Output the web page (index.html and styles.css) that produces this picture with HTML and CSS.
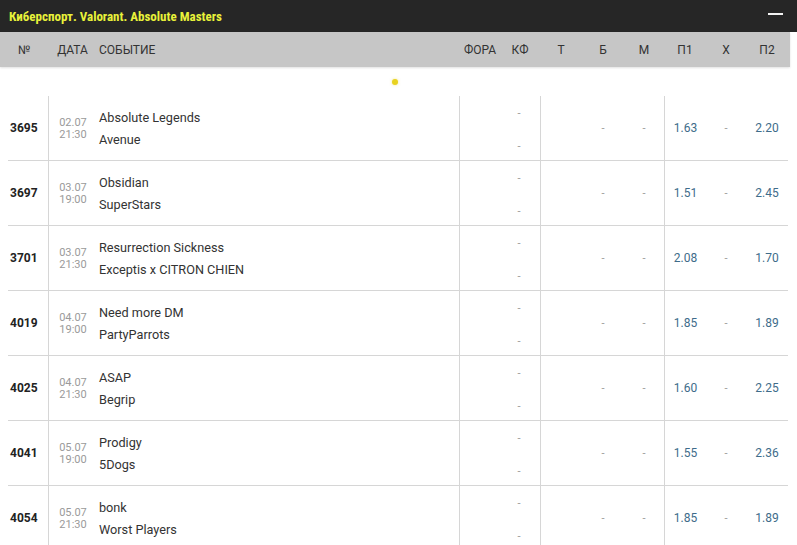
FILE: index.html
```html
<!DOCTYPE html>
<html lang="ru">
<head>
<meta charset="utf-8">
<title>Киберспорт. Valorant. Absolute Masters</title>
<link rel="stylesheet" href="styles.css">
</head>
<body>
<div class="topbar">
  <span class="title">Киберспорт. Valorant. Absolute Masters</span>
  <span class="collapse"></span>
</div>
<div class="head">
  <div class="hc c-num">№</div>
  <div class="hc c-date">ДАТА</div>
  <div class="hc c-event">СОБЫТИЕ</div>
  <div class="hc c-fora">ФОРА</div>
  <div class="hc">КФ</div>
  <div class="hc">Т</div>
  <div class="hc">Б</div>
  <div class="hc">М</div>
  <div class="hc">П1</div>
  <div class="hc">Х</div>
  <div class="hc">П2</div>
</div>
<div class="loader"><span class="dot"></span></div>
<div class="rows">
  <div class="row">
    <div class="num">3695</div>
    <div class="date"><span>02.07</span><span>21:30</span></div>
    <div class="event"><span>Absolute Legends</span><span>Avenue</span></div>
    <div class="fora"></div>
    <div class="kf"><span>-</span><span>-</span></div>
    <div class="t sep"></div><div class="dash">-</div><div class="dash">-</div>
    <div class="odd sep">1.63</div><div class="dash">-</div><div class="odd">2.20</div>
  </div>
  <div class="row">
    <div class="num">3697</div>
    <div class="date"><span>03.07</span><span>19:00</span></div>
    <div class="event"><span>Obsidian</span><span>SuperStars</span></div>
    <div class="fora"></div>
    <div class="kf"><span>-</span><span>-</span></div>
    <div class="t sep"></div><div class="dash">-</div><div class="dash">-</div>
    <div class="odd sep">1.51</div><div class="dash">-</div><div class="odd">2.45</div>
  </div>
  <div class="row">
    <div class="num">3701</div>
    <div class="date"><span>03.07</span><span>21:30</span></div>
    <div class="event"><span>Resurrection Sickness</span><span>Exceptis x CITRON CHIEN</span></div>
    <div class="fora"></div>
    <div class="kf"><span>-</span><span>-</span></div>
    <div class="t sep"></div><div class="dash">-</div><div class="dash">-</div>
    <div class="odd sep">2.08</div><div class="dash">-</div><div class="odd">1.70</div>
  </div>
  <div class="row">
    <div class="num">4019</div>
    <div class="date"><span>04.07</span><span>19:00</span></div>
    <div class="event"><span>Need more DM</span><span>PartyParrots</span></div>
    <div class="fora"></div>
    <div class="kf"><span>-</span><span>-</span></div>
    <div class="t sep"></div><div class="dash">-</div><div class="dash">-</div>
    <div class="odd sep">1.85</div><div class="dash">-</div><div class="odd">1.89</div>
  </div>
  <div class="row">
    <div class="num">4025</div>
    <div class="date"><span>04.07</span><span>21:30</span></div>
    <div class="event"><span>ASAP</span><span>Begrip</span></div>
    <div class="fora"></div>
    <div class="kf"><span>-</span><span>-</span></div>
    <div class="t sep"></div><div class="dash">-</div><div class="dash">-</div>
    <div class="odd sep">1.60</div><div class="dash">-</div><div class="odd">2.25</div>
  </div>
  <div class="row">
    <div class="num">4041</div>
    <div class="date"><span>05.07</span><span>19:00</span></div>
    <div class="event"><span>Prodigy</span><span>5Dogs</span></div>
    <div class="fora"></div>
    <div class="kf"><span>-</span><span>-</span></div>
    <div class="t sep"></div><div class="dash">-</div><div class="dash">-</div>
    <div class="odd sep">1.55</div><div class="dash">-</div><div class="odd">2.36</div>
  </div>
  <div class="row">
    <div class="num">4054</div>
    <div class="date"><span>05.07</span><span>21:30</span></div>
    <div class="event"><span>bonk</span><span>Worst Players</span></div>
    <div class="fora"></div>
    <div class="kf"><span>-</span><span>-</span></div>
    <div class="t sep"></div><div class="dash">-</div><div class="dash">-</div>
    <div class="odd sep">1.85</div><div class="dash">-</div><div class="odd">1.89</div>
  </div>
</div>
</body>
</html>
```

FILE: styles.css
```css
* { box-sizing: border-box; }
html, body { margin: 0; padding: 0; background: #fff; }
body {
  font-family: Roboto, "Noto Sans", sans-serif;
  font-stretch: 88%;
  color: #333;
  overflow: hidden;
}
.topbar {
  height: 32px;
  background: #262626;
  display: flex;
  align-items: center;
  justify-content: space-between;
  padding: 0 14px 0 9px;
}
.title {
  color: #e9f23a;
  font-weight: 700;
  font-size: 13px;
  font-stretch: 80%;
  white-space: nowrap;
}
.collapse {
  width: 15px;
  height: 2px;
  background: #f2f2f2;
  margin-bottom: 4px;
}
.head {
  height: 35px;
  width: 790px;
  background: #c6c6c6;
  box-shadow: 0 1px 2px rgba(0,0,0,0.12);
  display: grid;
  grid-template-columns: 48px 49px 362px 41px 40px 42px 42px 40px 42px 40px 42px;
  align-items: center;
  font-size: 12px;
  color: #333;
}
.hc { text-align: center; }
.head .c-num { text-align: left; padding-left: 18px; }
.head .c-event { text-align: left; padding-left: 2px; }
.head .c-fora { text-align: left; padding-left: 5px; }
.loader {
  height: 29px;
  display: flex;
  align-items: center;
  padding-left: 392px;
}
.dot {
  width: 6px;
  height: 6px;
  border-radius: 50%;
  background: #e8d21e;
  box-shadow: 0 0 3px rgba(232, 210, 30, 0.5);
}
.rows { margin-left: 8px; width: 780px; }
.row {
  display: grid;
  grid-template-columns: 40px 49px 362px 41px 40px 42px 42px 40px 42px 40px 42px;
  height: 65px;
  border-bottom: 1px solid #d6d6d6;
  align-items: stretch;
}
.row > div { display: flex; align-items: center; justify-content: center; }
.row .num {
  justify-content: flex-start;
  padding-left: 2px;
  font-weight: 700;
  font-size: 12px;
  color: #222;
}
.row .date {
  border-left: 1px solid #d6d6d6;
  flex-direction: column;
  font-size: 11px;
  line-height: 12px;
  color: #9a9a9a;
  padding-top: 1px;
}
.row .event {
  flex-direction: column;
  align-items: flex-start;
  justify-content: center;
  gap: 6px;
  padding-left: 2px;
  padding-top: 2px;
  font-size: 12.7px;
  line-height: 16px;
  color: #333;
}
.row .fora { border-left: 1px solid #d6d6d6; }
.row .kf {
  flex-direction: column;
  gap: 17px;
  padding-top: 4px;
  padding-right: 2px;
  font-size: 11px;
  line-height: 16px;
  color: #9a9a9a;
}
.row .sep { border-left: 1px solid #d6d6d6; }
.row .dash { font-size: 11px; color: #9a9a9a; }
.row .odd { font-size: 12px; color: #3e6c8a; }
```
